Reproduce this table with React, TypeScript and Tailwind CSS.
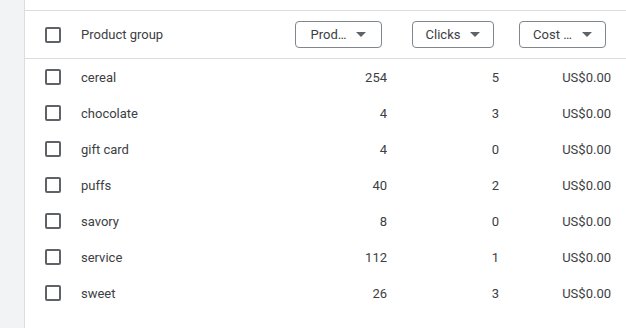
import React from "react";

const rows = [
  { name: "cereal", prod: "254", clicks: "5", cost: "US$0.00" },
  { name: "chocolate", prod: "4", clicks: "3", cost: "US$0.00" },
  { name: "gift card", prod: "4", clicks: "0", cost: "US$0.00" },
  { name: "puffs", prod: "40", clicks: "2", cost: "US$0.00" },
  { name: "savory", prod: "8", clicks: "0", cost: "US$0.00" },
  { name: "service", prod: "112", clicks: "1", cost: "US$0.00" },
  { name: "sweet", prod: "26", clicks: "3", cost: "US$0.00" },
];

function Box() {
  return <div className="w-[16px] h-[16px] border-2 border-[#5f6368] rounded-[2px]" />;
}

function Arrow() {
  return (
    <svg width="10" height="5" viewBox="0 0 10 5" className="shrink-0">
      <path d="M0 0 L10 0 L5 5 Z" fill="#5f6368" />
    </svg>
  );
}

function HeadBtn({ label, w }: { label: string; w: string }) {
  return (
    <div
      className={`${w} h-[27px] mr-[5px] border border-[#80868b] rounded-[4px] flex items-center justify-center gap-[10px] text-[13px] text-[#3c4043]`}
    >
      <span>{label}</span>
      <Arrow />
    </div>
  );
}

export default function App() {
  return (
    <div
      className="w-[626px] h-[328px] flex bg-white overflow-hidden"
      style={{ fontFamily: "Roboto, 'Liberation Sans', sans-serif" }}
    >
      <div className="w-[24px] shrink-0 bg-[#f1f3f4] border-r border-[#dadce0] box-content" />
      <div className="flex-1 pt-[10px]">
        <div className="grid grid-cols-[56px_1fr_112px_112px_112px] border-t border-b border-[#dadce0] h-[49px] items-center">
          <div className="pl-[20px] flex items-center"><Box /></div>
          <div className="text-[13px] text-[#3c4043]">Product group</div>
          <div className="flex justify-end pr-[15px]"><HeadBtn label="Prod…" w="w-[87px]" /></div>
          <div className="flex justify-end pr-[15px]"><HeadBtn label="Clicks" w="w-[82px]" /></div>
          <div className="flex justify-end pr-[15px]"><HeadBtn label="Cost …" w="w-[87px]" /></div>
        </div>
        {rows.map((r) => (
          <div
            key={r.name}
            className="grid grid-cols-[56px_1fr_112px_112px_112px] h-[36px] items-center text-[13px] text-[#3c4043]"
          >
            <div className="pl-[20px] flex items-center"><Box /></div>
            <div className="pt-[2px]">{r.name}</div>
            <div className="pt-[2px] text-right pr-[15px]">{r.prod}</div>
            <div className="pt-[2px] text-right pr-[15px]">{r.clicks}</div>
            <div className="pt-[2px] text-right pr-[15px]">{r.cost}</div>
          </div>
        ))}
      </div>
    </div>
  );
}
